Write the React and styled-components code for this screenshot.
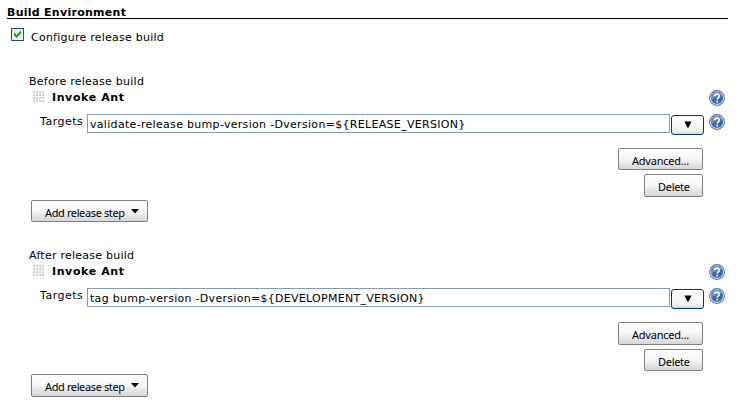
import React from "react";
import styled, { createGlobalStyle } from "styled-components";

const GlobalStyle = createGlobalStyle`
  * { box-sizing: border-box; }
  body { margin: 0; background: #fff; color: #000; font: 11px/16px "DejaVu Sans", sans-serif; }
`;

const Page = styled.main`
  width: 743px;
  height: 403px;
  overflow: hidden;
  padding: 4px 15px 0 7px;
  background: #fff;
`;

const Heading = styled.h1`
  height: 15px;
  margin: 0;
  border-bottom: 1px solid #000;
  font-size: 11px;
  line-height: 18px;
  font-weight: bold;
`;

const Text = styled.span`
  white-space: pre;
  letter-spacing: ${(p) => p.$spacing || 0}px;
`;

const CheckRow = styled.label`
  display: flex;
  height: 54px;
  padding: 9px 0 0 4px;
  gap: 7px;
  line-height: 20px;
`;

const CheckBox = styled.span`
  width: 13px;
  height: 13px;
  border: 1px solid #1c5180;
  background: linear-gradient(135deg, #e3e3de, #fff);
  display: block;
  svg { display: block; }
`;

const Section = styled.section`
  height: 174px;
`;

const Title = styled.div`
  height: 17px;
  padding-left: 22px;
  line-height: 18px;
`;

const StepHeader = styled.div`
  display: flex;
  height: 24px;
  padding: 0 3px 0 26px;
`;

const Grip = styled.svg`
  margin-top: 1px;
  flex: none;
`;

const StepName = styled.strong`
  flex: 1;
  padding-left: 7px;
  line-height: 15px;
`;

const FieldRow = styled.div`
  display: flex;
  height: 34px;
  padding: 0 3px 0 33px;
  align-items: flex-start;
`;

const FieldLabel = styled.label`
  width: 47px;
  line-height: 16px;
`;

const Field = styled.div`
  width: 583px;
  height: 19px;
  padding-left: 2px;
  border: 1px solid #7f9db9;
  line-height: 20px;
`;

const Expand = styled.button`
  display: flex;
  align-items: center;
  justify-content: center;
  width: 33px;
  height: 20px;
  margin: 1px 5px 0 1px;
  padding: 0;
  border: 1px solid #003c74;
  border-radius: 3px;
  background: linear-gradient(#fff, #f3f3ef 80%, #dcd8cf);
`;

const Actions = styled.div`
  display: flex;
  flex-direction: column;
  align-items: flex-end;
  height: 52px;
  padding-right: 25px;
  gap: ${(p) => p.$gap}px;
`;

const Button = styled.button`
  display: flex;
  flex: none;
  align-items: flex-start;
  justify-content: flex-start;
  width: ${(p) => p.$width}px;
  height: ${(p) => p.$height}px;
  padding: 4px 0 0 13px;
  border: 1px solid #808080;
  border-radius: 2px;
  background: linear-gradient(#fff 0%, #f8f8f9 45%, #d5d6d8 100%);
  color: #000;
  font: 11px/16px "Noto Sans", sans-serif;
`;

const AddRow = styled.div`
  padding-left: 24px;
`;

const StepLabel = styled(Text)`
  width: 86px;
  text-align: left;
`;

const Arrow = styled.svg`
  margin-top: 4px;
`;

function HelpIcon() {
  return (
    <svg width="16" height="16" viewBox="0 0 16 16" aria-label="Help">
      <circle cx="8" cy="8" r="7.4" fill="#fff" stroke="#5378ac" strokeWidth="1.1" />
      <circle cx="8" cy="8" r="6.1" fill="#416ba7" />
      <path d="M2.3 9.5A5.8 5.8 0 0 1 13.1 5Q8 5.5 2.3 9.5Z" fill="#7394c1" />
      <path d="M5.8 6.1C5.9 3.5 10.4 3.4 10.4 6C10.4 7.8 8.2 7.8 8.2 9.5M8.2 10.8V12.4" fill="none" stroke="#fff" strokeWidth="1.6" />
    </svg>
  );
}

function DragGrip() {
  return (
    <Grip width="12" height="12" shapeRendering="crispEdges">
      {[0, 3, 6, 9].map((y) => [0, 3, 6, 9].map((x) => (
        <g key={`${x}-${y}`}>
          <rect x={x} y={y} width="2" height="2" fill="#c8c8c8" />
          <rect x={x} y={y} width="1" height="1" fill="#e2e2e2" />
        </g>
      )))}
    </Grip>
  );
}

function BuildSteps({ title, value, spacing, sizes, gap }) {
  return (
    <Section>
      <Title><Text $spacing={0.25}>{title}</Text></Title>
      <StepHeader>
        <DragGrip />
        <StepName><Text $spacing={0.6}>Invoke Ant</Text></StepName>
        <HelpIcon />
      </StepHeader>
      <FieldRow>
        <FieldLabel><Text $spacing={0.5}>Targets</Text></FieldLabel>
        <Field><Text $spacing={spacing}>{value}</Text></Field>
        <Expand aria-label="Expand">
          <svg width="8" height="8"><path d="M.4.5H7.6L4 7.5Z" /></svg>
        </Expand>
        <HelpIcon />
      </FieldRow>
      <Actions $gap={gap}>
        <Button $width={85} $height={sizes[0]}><Text $spacing={-0.22}>Advanced...</Text></Button>
        <Button $width={59} $height={sizes[1]}><Text $spacing={-0.3}>Delete</Text></Button>
      </Actions>
      <AddRow>
        <Button $width={117} $height={sizes[2]}>
          <StepLabel $spacing={-0.38}>Add release step</StepLabel>
          <Arrow width="8" height="5"><path d="M0 0H8L4 4.5Z" /></Arrow>
        </Button>
      </AddRow>
    </Section>
  );
}

export default function App() {
  return (
    <>
      <GlobalStyle />
      <Page>
        <Heading><Text $spacing={0.27}>Build Environment</Text></Heading>
        <CheckRow>
          <CheckBox>
            <svg width="11" height="11" shapeRendering="crispEdges"><path d="M2 4V7L4 9L9 4V1L4 6Z" fill="#21a121" /></svg>
          </CheckBox>
          <Text $spacing={0.24}>Configure release build</Text>
        </CheckRow>
        <BuildSteps title="Before release build" value="validate-release bump-version -Dversion=${RELEASE_VERSION}" spacing={0.31} sizes={[22, 23, 22]} gap={4} />
        <BuildSteps title="After release build" value="tag bump-version -Dversion=${DEVELOPMENT_VERSION}" spacing={0.29} sizes={[23, 22, 23]} gap={4} />
      </Page>
    </>
  );
}
